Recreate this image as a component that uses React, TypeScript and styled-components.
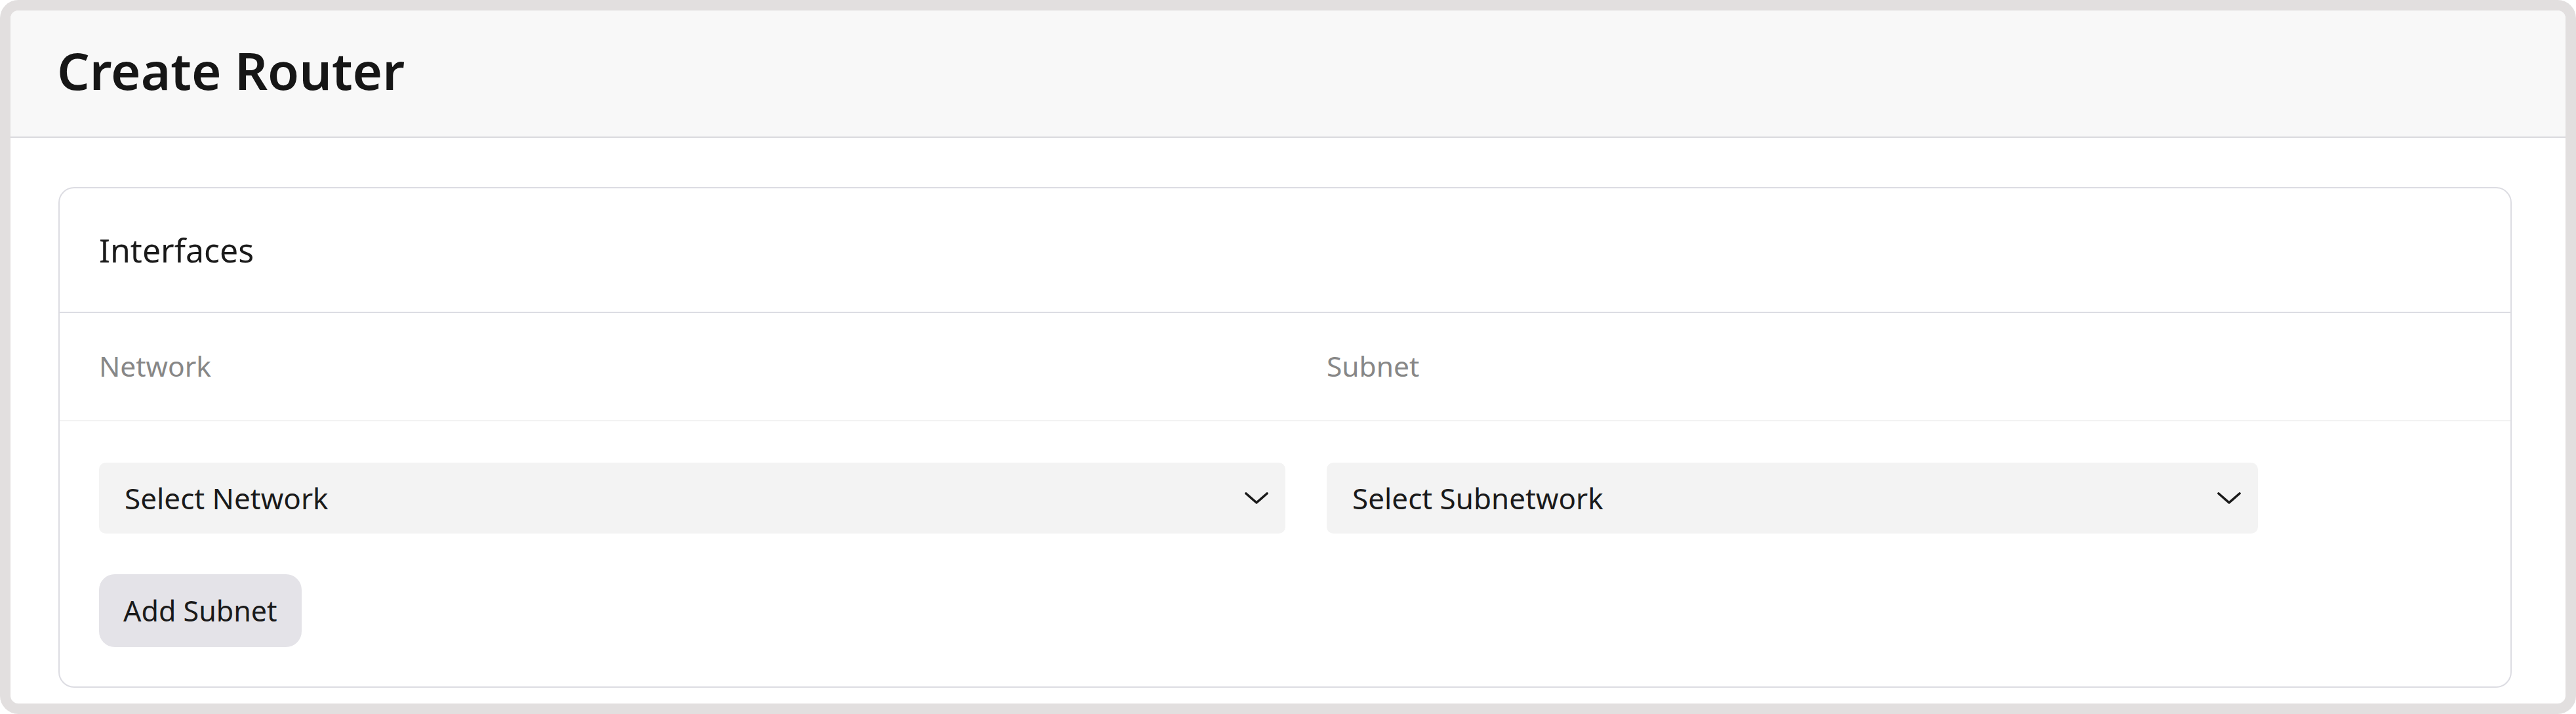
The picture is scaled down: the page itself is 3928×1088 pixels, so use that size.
import React from "react";
import styled, { createGlobalStyle } from "styled-components";

const GlobalStyle = createGlobalStyle`
  html, body {
    margin: 0;
    padding: 0;
    background: #ffffff;
  }
  * {
    box-sizing: border-box;
  }
  body {
    font-family: "Noto Sans", "Open Sans", sans-serif;
    color: #1a1a1a;
  }
`;

// outer frame around the whole page
const Frame = styled.div`
  width: 3928px;
  height: 1088px;
  border: 16px solid #e2dfdf;
  border-radius: 28px;
  background: #ffffff;
  display: flex;
  flex-direction: column;
  overflow: hidden;
`;

const PageHeader = styled.header`
  height: 194px;
  display: flex;
  align-items: center;
  padding: 0 0 10px 71px;
  background: #f8f8f8;
  border-bottom: 2px solid #dadade;
`;

const Title = styled.h1`
  margin: 0;
  font-size: 78px;
  font-weight: 600;
  line-height: 1;
  color: #161616;
`;

const Main = styled.main`
  flex: 1;
  padding: 75px 82px 0 73px;
`;

const Card = styled.section`
  border: 2px solid #dcdce2;
  border-radius: 24px;
  background: #ffffff;
`;

const CardHeader = styled.div`
  height: 190px;
  display: flex;
  align-items: center;
  padding-left: 60px;
  border-bottom: 2px solid #dcdde3;
`;

const CardTitle = styled.h2`
  margin: 0;
  font-size: 50px;
  font-weight: 400;
  line-height: 1;
  color: #1a1a1a;
`;

const Columns = styled.div`
  display: grid;
  grid-template-columns: 1809px 1420px 1fr;
  column-gap: 63px;
  padding: 0 60px;
`;

const LabelRow = styled(Columns)`
  height: 165px;
  align-items: center;
  border-bottom: 2px solid #f2f2f2;
`;

const Label = styled.span`
  font-size: 42.5px;
  color: #878787;
  line-height: 1;
`;

const Body = styled.div`
  display: flex;
  flex-direction: column;
  gap: 62px;
  padding: 63px 0 60px;
`;

const Select = styled.div`
  height: 108px;
  display: flex;
  align-items: center;
  justify-content: space-between;
  padding: 0 26px 0 39px;
  background: #f3f3f3;
  border-radius: 10px;
  font-size: 44px;
  color: #1a1a1a;
`;

const ButtonRow = styled.div`
  padding-left: 60px;
`;

const Button = styled.button`
  height: 111px;
  padding: 0 37px;
  border: none;
  border-radius: 24px;
  background: #e4e3e8;
  font-family: "Noto Sans", "Open Sans", sans-serif;
  font-size: 43px;
  color: #1a1a1a;
`;

const Chevron = () => (
  <svg width="36" height="18" viewBox="0 0 36 18" fill="none">
    <polyline
      points="2,2 18,16 34,2"
      stroke="#1a1a1a"
      strokeWidth="3.6"
      strokeLinecap="round"
      strokeLinejoin="round"
    />
  </svg>
);

export default function App() {
  return (
    <>
      <GlobalStyle />
      <Frame>
        <PageHeader>
          <Title>Create Router</Title>
        </PageHeader>
        <Main>
          <Card>
            <CardHeader>
              <CardTitle>Interfaces</CardTitle>
            </CardHeader>
            <LabelRow>
              <Label>Network</Label>
              <Label>Subnet</Label>
            </LabelRow>
            <Body>
              <Columns>
                <Select>
                  <span>Select Network</span>
                  <Chevron />
                </Select>
                <Select>
                  <span>Select Subnetwork</span>
                  <Chevron />
                </Select>
              </Columns>
              <ButtonRow>
                <Button>Add Subnet</Button>
              </ButtonRow>
            </Body>
          </Card>
        </Main>
      </Frame>
    </>
  );
}
